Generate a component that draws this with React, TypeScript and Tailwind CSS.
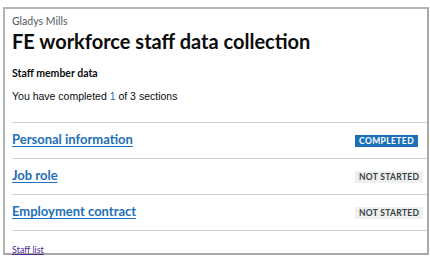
import React from "react";

const rows = [
  { name: "Personal information", status: "COMPLETED", done: true },
  { name: "Job role", status: "NOT STARTED", done: false },
  { name: "Employment contract", status: "NOT STARTED", done: false },
];

export default function App() {
  return (
    <div className="w-[430px] h-[262px] bg-white overflow-hidden" style={{ fontFamily: '"Liberation Sans", Arial, sans-serif' }}>
      <div className="ml-[3px] mt-[7px] w-[426px] h-[248px] border-2 border-[#b4b4b4] border-r-[#a8a8a8] border-b-[#a8a8a8] bg-white overflow-visible relative">
        <div className="pl-[7px] pt-[6px]">
          <div className="text-[10.5px] leading-[12px] text-[#505a5f]" style={{ fontFamily: '"Lato", sans-serif' }}>Gladys Mills</div>
          <h1 className="mt-[2px] text-[20px] leading-[24px] font-bold text-[#0b0c0c]" style={{ fontFamily: '"Lato", sans-serif' }}>FE workforce staff data collection</h1>
          <div className="mt-[14px] text-[10.5px] leading-[12px] font-bold text-[#0b0c0c]" style={{ fontFamily: '"Lato", sans-serif' }}>Staff member data</div>
          <div className="mt-[11px] text-[10.5px] leading-[12px] text-[#0b0c0c]">
            You have completed <span className="text-[#1d70b8]">1</span> of 3 sections
          </div>
          <div className="mt-[20px] border-t border-[#cfcfcf]">
            {rows.map((r) => (
              <div key={r.name} className="h-[36px] border-b border-[#cfcfcf] flex items-center">
                <a className="flex-1 -mt-[2px] text-[13px] font-bold text-[#1d70b8] underline underline-offset-2" style={{ fontFamily: '"Lato", sans-serif' }}>
                  {r.name}
                </a>
                <div className="w-[72px] shrink-0 -mt-[3px]">
                  <span
                    className={
                      r.done
                        ? "inline-block whitespace-nowrap px-[4px] h-[12px] leading-[12px] text-[8.5px] font-bold tracking-[0.4px] bg-[#1d70b8] text-white"
                        : "inline-block whitespace-nowrap px-[4px] h-[12px] leading-[12px] text-[8.5px] font-bold tracking-[0.3px] bg-[#eeefef] text-[#383f43]"
                    }
                    style={{ fontFamily: '"Lato", sans-serif' }}
                  >
                    {r.status}
                  </span>
                </div>
              </div>
            ))}
          </div>
          <a className="block mt-[13px] text-[9px] leading-[11px] text-[#4c2c92] underline" style={{ fontFamily: '"Lato", sans-serif' }}>Staff list</a>
        </div>
      </div>
    </div>
  );
}
